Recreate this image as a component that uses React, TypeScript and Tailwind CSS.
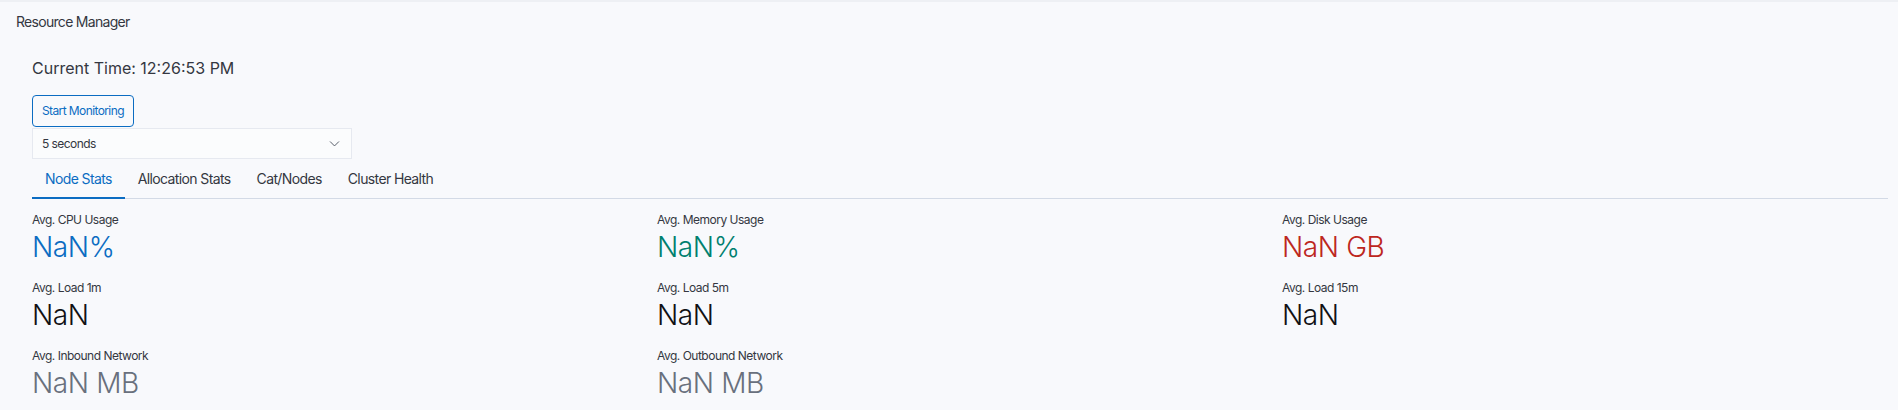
import React, { useState } from "react";

interface Stat {
  /** 라벨 */
  label: string;
  /** 값 */
  value: string;
  /** 값 색상 클래스 */
  color: string;
}

const stats: (Stat | null)[] = [
  { label: "Avg. CPU Usage", value: "NaN%", color: "text-[#0b6cc2]" },
  { label: "Avg. Memory Usage", value: "NaN%", color: "text-[#00806f]" },
  { label: "Avg. Disk Usage", value: "NaN GB", color: "text-[#bd271e]" },
  { label: "Avg. Load 1m", value: "NaN", color: "text-[#111114]" },
  { label: "Avg. Load 5m", value: "NaN", color: "text-[#111114]" },
  { label: "Avg. Load 15m", value: "NaN", color: "text-[#111114]" },
  { label: "Avg. Inbound Network", value: "NaN MB", color: "text-[#69707d]" },
  { label: "Avg. Outbound Network", value: "NaN MB", color: "text-[#69707d]" },
  null,
];

const tabs = ["Node Stats", "Allocation Stats", "Cat/Nodes", "Cluster Health"];

const App: React.FC = () => {
  const [activeTab, setActiveTab] = useState<string>("Node Stats");

  return (
    <div
      className="w-[1898px] h-[410px] overflow-hidden bg-[#f8f9fc] border-t-2 border-[#eef0f4] text-[#343741]"
      style={{ fontFamily: "Inter, 'Noto Sans', sans-serif" }}
    >
      <div className="pl-4 pt-[10px] text-[14px] leading-5 tracking-[-0.7px]">Resource Manager</div>

      <div className="pl-8 pr-[10px] pt-6">
        <div className="text-[16px] leading-6">Current Time: 12:26:53 PM</div>

        <div className="mt-[15px] flex flex-col items-start">
          <button className="h-8 px-[9px] rounded-[4px] border border-[#0b6cc2] text-[12px] tracking-[-0.6px] text-[#0b6cc2] bg-transparent">
            Start Monitoring
          </button>
          <div className="w-[320px] h-[31px] mt-px flex items-center justify-between pl-[9px] pr-[10px] bg-[#fbfcfd] border border-[#e6e9f0] text-[12px] tracking-[-0.55px] text-[#343741]">
            <span>5 seconds</span>
            <svg width="13" height="13" viewBox="0 0 16 16" fill="none" stroke="#535966" strokeWidth="1.2">
              <path d="M2.5 5.5 8 11l5.5-5.5" />
            </svg>
          </div>
        </div>

        <div className="flex h-10 border-b border-[#d3dae6]">
          {tabs.map((tab) => (
            <button
              key={tab}
              onClick={() => setActiveTab(tab)}
              className={
                tab === activeTab
                  ? "px-[13px] text-[14px] tracking-[-0.62px] text-[#0b6cc2] border-b-2 border-[#0b6cc2] -mb-px"
                  : "px-[13px] text-[14px] tracking-[-0.62px] text-[#343741]"
              }
            >
              {tab}
            </button>
          ))}
        </div>

        <div className="grid grid-cols-3 gap-x-[19px] gap-y-[15px] mt-[13px]">
          {stats.map((stat, index) =>
            stat ? (
              <div key={index}>
                <div className="text-[12px] leading-4 tracking-[-0.5px] text-[#343741]">{stat.label}</div>
                <div className={`mt-px text-[28px] leading-9 font-light tracking-[-0.4px] ${stat.color}`}>{stat.value}</div>
              </div>
            ) : (
              <div key={index}></div>
            )
          )}
        </div>
      </div>
    </div>
  );
};

export default App;
